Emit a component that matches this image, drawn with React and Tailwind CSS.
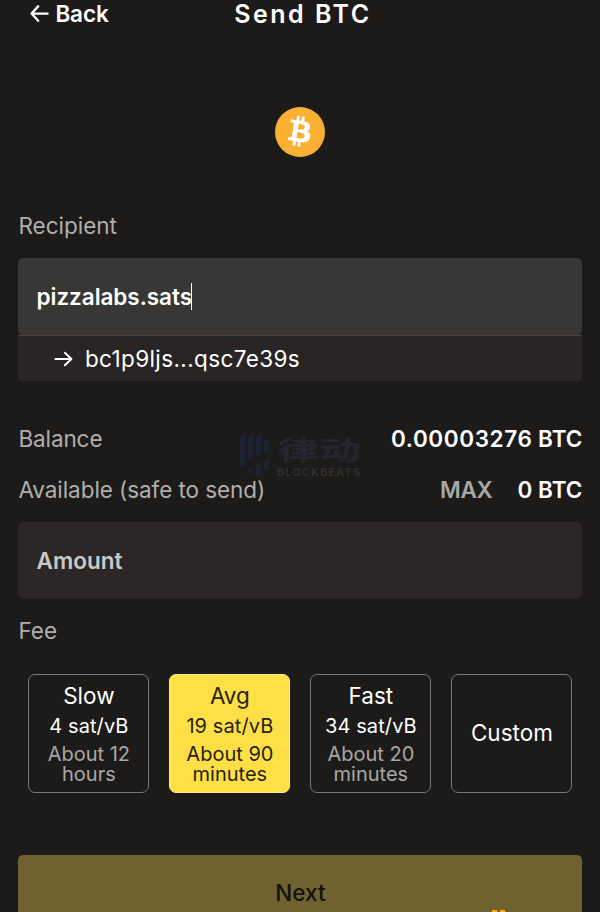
const FEES = [
  { name: 'Slow', rate: '4 sat/vB', eta: 'About 12 hours' },
  { name: 'Avg', rate: '19 sat/vB', eta: 'About 90 minutes', active: true },
  { name: 'Fast', rate: '34 sat/vB', eta: 'About 20 minutes' },
];

function Arrow({ className, flip, weight }) {
  return (
    <svg viewBox="0 0 20 20" className={className} fill="none" stroke="currentColor" strokeWidth={weight} strokeLinecap="round" strokeLinejoin="round">
      <path d={flip ? 'M19 9.500H1.5M8.500 1.500L1.200 9.500L8.500 17.500' : 'M1 10H18.500M11.500 3L18.800 10L11.500 17'} />
    </svg>
  );
}

function Bitcoin() {
  return (
    <svg viewBox="0 0 32 32" className="size-[50px]">
      <circle cx="16" cy="16" r="16" fill="#fab133" />
      <path
        fill="#fff"
        transform="rotate(-5 16 16) translate(-.5 -.6)"
        d="M23.189 14.02c.314-2.096-1.283-3.223-3.465-3.975l.708-2.84-1.728-.43-.69 2.765c-.454-.114-.92-.22-1.385-.326l.695-2.783L15.596 6l-.708 2.839c-.376-.086-.746-.17-1.104-.26l.002-.009-2.384-.595-.46 1.846s1.283.294 1.256.312c.7.175.826.638.805 1.006l-.806 3.235c.048.012.11.03.18.057l-.183-.045-1.13 4.532c-.086.212-.303.531-.793.41.018.025-1.256-.313-1.256-.313l-.858 1.978 2.25.561c.418.105.828.215 1.231.318l-.715 2.872 1.727.43.708-2.84c.472.127.93.245 1.378.357l-.706 2.828 1.728.43.715-2.866c2.948.558 5.164.333 6.097-2.333.752-2.146-.037-3.385-1.588-4.192 1.13-.26 1.98-1.003 2.207-2.538zm-3.95 5.538c-.533 2.147-4.148.986-5.32.695l.95-3.805c1.172.293 4.929.872 4.37 3.11zm.535-5.569c-.487 1.953-3.495.96-4.47.717l.86-3.45c.975.243 4.118.696 3.61 2.733z"
      />
    </svg>
  );
}

function Watermark() {
  return (
    <div className="pointer-events-none absolute left-[240px] top-[434px] flex gap-[7px] text-[#25252d]">
      <svg viewBox="0 0 30 44" className="h-11 w-[30px]" fill="#1e2230">
        <path d="M0 1h5v31H0zM8 1h5v24H8zM16 1h5v20h-5zM24 6h5v12h-5zM8 35h5v4H8zM16 29h5v13h-5zM24 25h5v11h-5z" />
        <circle cx="2.500" cy="39" r="1.500" />
      </svg>
      <div className="flex w-[86px] flex-col">
        <span className="h-8 origin-left scale-x-[1.62] self-start whitespace-nowrap font-['Noto_Sans_CJK_SC',sans-serif] text-[26px] font-bold leading-[30px]">律动</span>
        <span className="whitespace-nowrap text-[10.5px] font-semibold leading-[13px] tracking-[1.5px] text-[#302f30]">BLOCKBEATS</span>
      </div>
    </div>
  );
}

export default function App() {
  return (
    <div className="relative flex h-[912px] w-[600px] flex-col overflow-hidden bg-[#1c1b19] pl-[18.4px] pr-[17.6px] font-['Inter',sans-serif] text-[22.5px] leading-7 text-white *:shrink-0">
      <header className="grid h-7 grid-cols-[1fr_auto_1fr] items-center">
        <button className="-mt-px flex items-center gap-[5px] pl-[11px] font-semibold">
          <Arrow flip weight={2.6} className="h-[18px] w-[21px]" />
          <span className="whitespace-nowrap tracking-[-0.1px]">Back</span>
        </button>
        <h1 className="whitespace-nowrap pl-[5px] text-[25px] font-semibold tracking-[2.5px]">Send BTC</h1>
      </header>

      <div className="mt-[79px] flex h-[50px] justify-center">
        <Bitcoin />
      </div>

      <label className="mt-[55px] h-7 text-[#b1afad]">Recipient</label>
      <div className="mt-[18px] flex h-[77px] items-center rounded-[5px] bg-[#383735] pl-[18.2px] font-semibold">
        <span className="whitespace-nowrap tracking-[-0.05px]">pizzalabs.sats</span>
        <span className="-ml-px h-[27px] w-[1.5px] bg-white" />
      </div>
      <div className="flex h-[46px] items-center gap-3 border-t border-[#464341] bg-[#2a2524] pl-[35.5px]">
        <Arrow weight={2.2} className="h-[18px] w-[19px]" />
        <span className="whitespace-nowrap tracking-[0.38px]">bc1p9ljs...qsc7e39s</span>
      </div>

      <div className="mt-11 flex h-7 justify-between">
        <span className="tracking-[-0.1px] text-[#b1afad]">Balance</span>
        <span className="whitespace-nowrap font-semibold">
          <span className="tracking-[0.6px]">0.00003276</span> BTC
        </span>
      </div>
      <div className="mt-[23px] flex h-7">
        <span className="grow whitespace-nowrap tracking-[-0.07px] text-[#b1afad]">Available (safe to send)</span>
        <span className="mr-[25px] font-semibold tracking-[-0.2px] text-[#a9a7a5]">MAX</span>
        <span className="whitespace-nowrap font-semibold">0 BTC</span>
      </div>

      <div className="mt-[18px] flex h-[77px] items-center rounded-[5px] bg-[#2c2726] pl-[18.2px] font-semibold text-[#cbc9c7]">Amount</div>

      <span className="mt-[18px] h-7 text-[#b1afad]">Fee</span>

      <div className="mx-[10px] mt-[29px] grid h-[119px] grid-cols-4 gap-x-[20px]">
        {FEES.map((f) => (
          <button
            key={f.name}
            className={`flex flex-col items-center rounded-[7px] border-[1.5px] pt-[6px] ${f.active ? 'border-[#ffe98a] bg-[#fee046] text-[#28220c]' : 'border-[#7a7977]'}`}
          >
            <span className="h-[30px] leading-[30px]">{f.name}</span>
            <span className="h-[31px] text-[20px] leading-[31px] tracking-[0.1px]">{f.rate}</span>
            <span className={`w-[100px] pt-0.5 text-[20px] leading-5 ${f.active ? '' : 'text-[#a9a7a5]'}`}>{f.eta}</span>
          </button>
        ))}
        <button className="rounded-[7px] border-[1.5px] border-[#7a7977] pb-[2px]">Custom</button>
      </div>

      <button className="mt-[62px] flex h-[76px] justify-center rounded-[5px] bg-[#706131] pt-6 font-medium text-[#14110a]">Next</button>

      <Watermark />
      <div className="absolute left-[492px] top-[910px] flex gap-[3px]">
        <span className="h-0.5 w-[5px] bg-[#ffae0b]" />
        <span className="h-0.5 w-[5px] bg-[#ffae0b]" />
      </div>
    </div>
  );
}
